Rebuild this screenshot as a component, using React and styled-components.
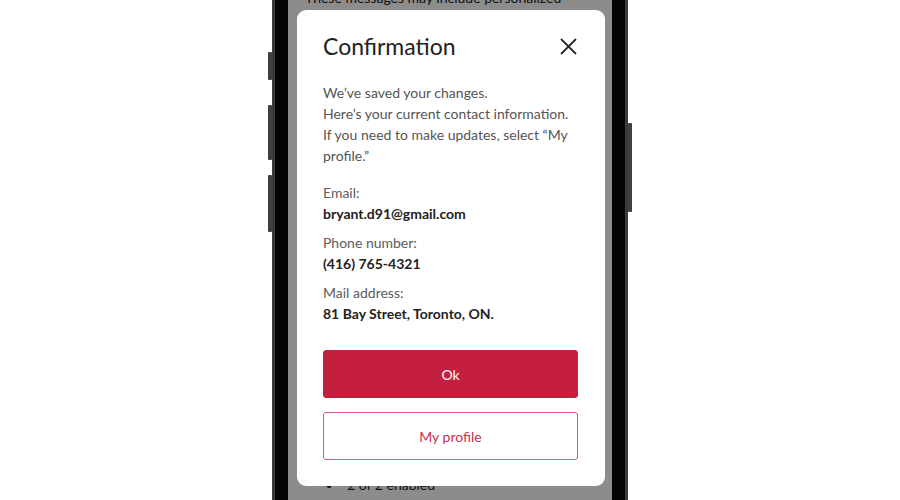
import React from "react";
import styled, { createGlobalStyle } from "styled-components";

const GlobalStyle = createGlobalStyle`
  html, body {
    margin: 0;
    padding: 0;
    background: #fff;
  }
  body {
    font-family: Lato, "Open Sans", Arial, sans-serif;
    -webkit-font-smoothing: antialiased;
  }
`;

const Page = styled.div`
  width: 900px;
  height: 500px;
  display: flex;
  justify-content: center;
  overflow: hidden;
  background: #fff;
`;

const Phone = styled.div`
  position: relative;
  width: 324px;
  height: 500px;
  padding: 0 13px;
  background: #050505;
  border-left: 3px solid #3a3a3a;
  border-right: 3px solid #3a3a3a;
`;

const SideButton = styled.span`
  position: absolute;
  width: 4px;
  border-radius: 1px;
  background: #3f3f3f;
  ${(p) => (p.$right ? "right: -7px;" : "left: -7px;")}
`;

const Screen = styled.div`
  position: relative;
  height: 100%;
  background: #fff;
  overflow: hidden;
  display: flex;
  flex-direction: column;
  justify-content: space-between;
`;

const BackText = styled.p`
  margin: -12px 0 0;
  padding: 0 17px;
  font-size: 14px;
  line-height: 20px;
  color: #222;
`;

const BackBullet = styled.div`
  display: flex;
  gap: 14px;
  margin: 0 0 5px;
  padding: 0 0 0 37px;
  font-size: 14px;
  line-height: 20px;
  color: #222;
`;

const Overlay = styled.div`
  position: absolute;
  inset: 0;
  background: rgba(0, 0, 0, 0.45);
  padding: 10px 7px 0 9px;
`;

const Modal = styled.div`
  background: #fff;
  border-radius: 9px;
  padding: 22px 27px 26px 26px;
  display: flex;
  flex-direction: column;
`;

const Header = styled.div`
  display: flex;
  align-items: center;
  justify-content: space-between;
`;

const Title = styled.h2`
  margin: 0;
  font-size: 23px;
  line-height: 28px;
  font-weight: 400;
  color: #222;
`;

const CloseButton = styled.button`
  display: flex;
  padding: 0;
  margin-right: 1px;
  border: 0;
  background: none;
  cursor: pointer;
`;

const Intro = styled.p`
  margin: 22px 0 16px;
  font-size: 14px;
  line-height: 21px;
  color: #555;
`;

const Fields = styled.dl`
  margin: 0;
  display: flex;
  flex-direction: column;
  gap: 8px;
`;

const Field = styled.div`
  display: flex;
  flex-direction: column;
`;

const Label = styled.dt`
  font-size: 14px;
  line-height: 21px;
  color: #5c5c5c;
`;

const Value = styled.dd`
  margin: 0;
  font-size: 14px;
  line-height: 21px;
  font-weight: 700;
  color: #222;
`;

const Actions = styled.div`
  display: flex;
  flex-direction: column;
  gap: 14px;
  margin-top: 26px;
`;

const Button = styled.button`
  height: 48px;
  border-radius: 3px;
  font-family: inherit;
  font-size: 14px;
  cursor: pointer;
  border: ${(p) => (p.$outline ? "1.5px solid #d65a72" : "1px solid #c41f3e")};
  background: ${(p) => (p.$outline ? "#fff" : "#c41f3e")};
  color: ${(p) => (p.$outline ? "#c8304d" : "#fff")};
`;

const CloseIcon = () => (
  <svg width="17" height="17" viewBox="0 0 17 17">
    <path d="M1 1 L16 16 M16 1 L1 16" stroke="#2a2a2a" strokeWidth="1.8" fill="none" />
  </svg>
);

const contact = [
  { label: "Email:", value: "bryant.d91@gmail.com" },
  { label: "Phone number:", value: "(416) 765-4321" },
  { label: "Mail address:", value: "81 Bay Street, Toronto, ON." },
];

const App = () => (
  <Page>
    <GlobalStyle />
    <Phone>
      <SideButton style={{ top: 52, height: 28 }} />
      <SideButton style={{ top: 105, height: 55 }} />
      <SideButton style={{ top: 175, height: 57 }} />
      <SideButton $right style={{ top: 123, height: 89 }} />
      <Screen>
        <BackText>These messages may include personalized</BackText>
        <BackBullet>
          <span>•</span>
          <span>2 of 2 enabled</span>
        </BackBullet>
        <Overlay>
          <Modal role="dialog">
            <Header>
              <Title>Confirmation</Title>
              <CloseButton aria-label="Close">
                <CloseIcon />
              </CloseButton>
            </Header>
            <Intro>
              We’ve saved your changes.
              <br />
              Here’s your current contact information. If you need to make
              updates, select “My profile.”
            </Intro>
            <Fields>
              {contact.map((c) => (
                <Field key={c.label}>
                  <Label>{c.label}</Label>
                  <Value>{c.value}</Value>
                </Field>
              ))}
            </Fields>
            <Actions>
              <Button>Ok</Button>
              <Button $outline>My profile</Button>
            </Actions>
          </Modal>
        </Overlay>
      </Screen>
    </Phone>
  </Page>
);

export default App;
